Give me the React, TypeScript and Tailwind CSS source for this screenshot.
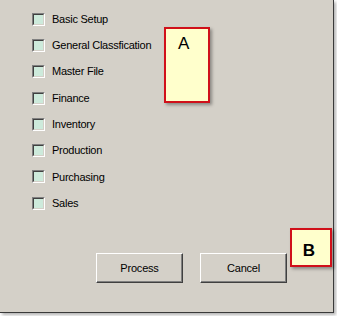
import React from "react";

const modules = [
  "Basic Setup",
  "General Classfication",
  "Master File",
  "Finance",
  "Inventory",
  "Production",
  "Purchasing",
  "Sales",
];

function ClassicCheckbox() {
  return (
    <span className="box-border w-[13px] h-[13px] border border-t-[#808080] border-l-[#808080] border-b-white border-r-white shrink-0">
      <span className="block w-full h-full border border-t-[#404040] border-l-[#404040] border-b-[#d4d0c8] border-r-[#d4d0c8] bg-[#cdeadb]" />
    </span>
  );
}

function ClassicButton({ label }: { label: string }) {
  return (
    <button className="box-border w-[87px] h-[30px] bg-[#d4d0c8] border border-t-white border-l-white border-b-[#404040] border-r-[#404040] shadow-[inset_-1px_-1px_0_#808080] text-[11px] tracking-[-0.2px] text-black">
      {label}
    </button>
  );
}

function Callout({ text, className }: { text: string; className: string }) {
  return (
    <div
      className={`absolute box-border border-2 border-[#d0101a] bg-[#ffffcc] shadow-[2px_2px_3px_rgba(0,0,0,0.35)] text-[17px] text-black ${className}`}
    >
      {text}
    </div>
  );
}

export default function App() {
  return (
    <div className="w-[337px] h-[316px] bg-white" style={{ fontFamily: '"Liberation Sans", Arial, sans-serif' }}>
      <div className="relative box-border w-[334px] h-[313px] bg-[#d4d0c8] border-r border-b border-[#3a3a3a] shadow-[2px_2px_3px_rgba(0,0,0,0.3)] flex flex-col">
        {/* module checkboxes */}
        <div className="flex flex-col pt-[6px] pl-[32px]">
          {modules.map((m) => (
            <label key={m} className="flex items-center h-[26.3px] gap-[7px] text-[11px] tracking-[-0.25px] text-black">
              <ClassicCheckbox />
              <span>{m}</span>
            </label>
          ))}
        </div>

        {/* buttons */}
        <div className="mt-auto flex gap-[17px] pl-[96px] pb-[29px]">
          <ClassicButton label="Process" />
          <ClassicButton label="Cancel" />
        </div>

        <Callout text="A" className="left-[164px] top-[27px] w-[46px] h-[76px] pl-[12px] pt-[2px]" />
        <Callout text="B" className="left-[290px] top-[228px] w-[42px] h-[39px] font-bold flex justify-center pt-[8px] pr-[4px]" />
      </div>
    </div>
  );
}
